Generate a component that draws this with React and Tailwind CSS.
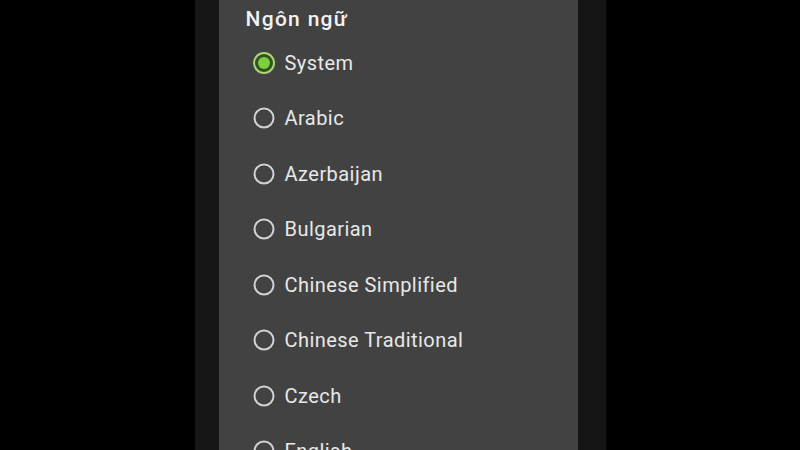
import React from "react";

const items = [
  "System",
  "Arabic",
  "Azerbaijan",
  "Bulgarian",
  "Chinese Simplified",
  "Chinese Traditional",
  "Czech",
  "English",
];

function Radio({ checked }) {
  if (checked) {
    return (
      <svg width="24" height="24" viewBox="0 0 24 24" className="shrink-0">
        <circle cx="12" cy="12" r="10" fill="#34521f" stroke="#a9d67a" strokeWidth="2" />
        <circle cx="12" cy="12" r="6" fill="#7cd23e" />
      </svg>
    );
  }
  return (
    <svg width="24" height="24" viewBox="0 0 24 24" className="shrink-0">
      <circle cx="12" cy="12" r="9.5" fill="none" stroke="#d2d2d2" strokeWidth="2" />
    </svg>
  );
}

export default function App() {
  return (
    <div
      className="w-[800px] h-[450px] bg-black flex justify-center overflow-hidden"
      style={{ fontFamily: "Roboto, 'Noto Sans', sans-serif" }}
    >
      <div className="w-[24px] h-full bg-[#161616]" />
      <div className="w-[359px] h-full bg-[#424242] flex flex-col overflow-hidden">
        <div className="shrink-0 pl-[27px] pt-[7px] h-[35px] text-[21px] leading-[24px] font-medium tracking-[1.3px] text-[#f2f2f2]">
          Ngôn ngữ
        </div>
        <div className="shrink-0 flex flex-col pl-[33px]">
          {items.map((it, i) => (
            <div key={it} className="h-[55.5px] flex items-center gap-[9px] shrink-0">
              <Radio checked={i === 0} />
              <span className="text-[20px] leading-[24px] tracking-[0.45px] whitespace-nowrap text-[#e8e8e8]">{it}</span>
            </div>
          ))}
        </div>
      </div>
      <div className="w-[28px] h-full bg-[#141414]" />
    </div>
  );
}
